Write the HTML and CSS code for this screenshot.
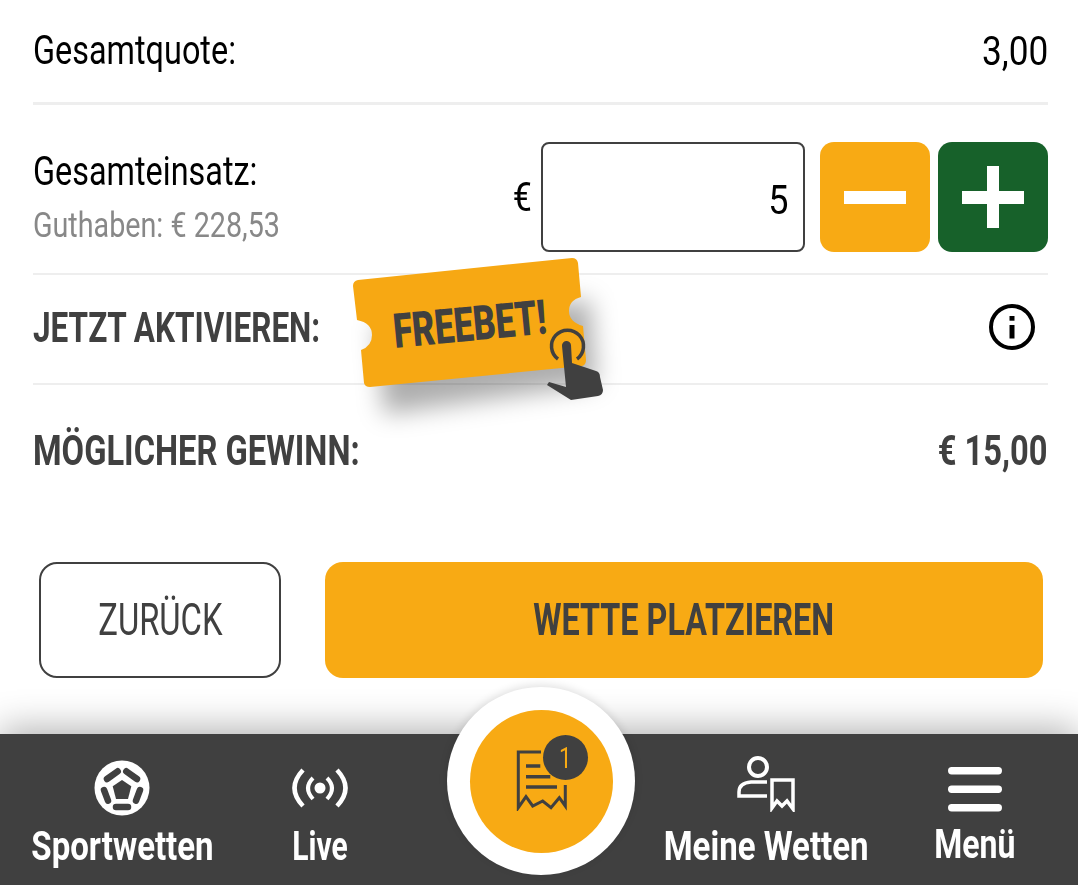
FILE: index.html
```html
<!DOCTYPE html>
<html lang="de">
<head>
    <meta charset="UTF-8">
    <meta name="viewport" content="width=device-width, initial-scale=1.0">
    <title>Wettschein</title>
    <link rel="stylesheet" href="styles.css">
</head>
<body>
<div class="page">
    <section class="slip">
        <div class="row row-total">
            <span class="label"><span class="squeeze">Gesamtquote:</span></span>
            <span class="value"><span class="squeeze to-right">3,00</span></span>
        </div>
        <div class="row row-stake">
            <div class="stake-text">
                <span class="label"><span class="squeeze">Gesamteinsatz:</span></span>
                <span class="balance"><span class="squeeze">Guthaben: € 228,53</span></span>
            </div>
            <div class="stake-controls">
                <span class="currency">€</span>
                <div class="stake-input"><span class="squeeze to-right">5</span></div>
                <button class="step step-minus"><span class="bar-h"></span></button>
                <button class="step step-plus"><span class="bar-h"></span><span class="bar-v"></span></button>
            </div>
        </div>
        <div class="row row-promo">
            <span class="heading"><span class="squeeze">JETZT AKTIVIEREN:</span></span>
            <svg class="info" viewBox="0 0 46 46" width="46" height="46">
                <circle cx="23" cy="23" r="21" fill="none" stroke="#000" stroke-width="4"/>
                <rect x="20.500" y="12" width="5" height="4.700" fill="#000"/>
                <rect x="20.500" y="21" width="5" height="13.500" fill="#000"/>
            </svg>
        </div>
        <div class="row row-win">
            <span class="heading win"><span class="squeeze">MÖGLICHER GEWINN:</span></span>
            <span class="heading win"><span class="squeeze to-right">€ 15,00</span></span>
        </div>
        <div class="actions">
            <button class="btn btn-back"><span class="squeeze to-center">ZURÜCK</span></button>
            <button class="btn btn-place"><span class="squeeze to-center">WETTE PLATZIEREN</span></button>
        </div>
    </section>

    <svg class="ticket" viewBox="0 0 280 170" width="280" height="170">
        <defs>
            <filter id="soft" x="-30%" y="-60%" width="160%" height="220%">
                <feGaussianBlur stdDeviation="12"/>
            </filter>
        </defs>
        <path d="M36 76L250 50L256 134L44 164Z" fill="rgba(0,0,0,.32)" filter="url(#soft)"/>
        <path d="M18 30L232 8Q237 8 238 13L241 47Q229 50 229 61Q229 72 243 76L246 110Q246 115 242 116L30 137Q25 137 24 133L21 100Q32 96 32 85Q32 73 17 70L13 36Q13 31 18 30Z" fill="#f7a813"/>
        <text class="ticket-text" transform="translate(55 98) rotate(-5.500) scale(.72 1)">FREEBET!</text>
        <path d="M218 109A16 16 0 1 1 237 109" fill="none" stroke="#404040" stroke-width="3.500"/>
        <path d="M222 96A4.500 4.500 0 0 1 231 95L232 113L256 121Q260 122 260 127L263 140Q263 145 258 146L231 150L207 135L209 132L226 137Z" fill="#404040"/>
    </svg>

    <nav class="tabbar">
        <a class="tab tab-sport">
            <svg viewBox="0 0 56 56" width="56" height="56">
                <circle cx="28" cy="28" r="27.500" fill="#fff"/>
                <path d="M28 20L37.300 26.300L34 39H22L18.700 26.300Z" fill="#404040"/>
                <path d="M13 19L23.700 11.300M43 19L32.300 11.300M10 30L14 40.700M46 30L42 40.700M22 47H34" fill="none" stroke="#404040" stroke-width="6.500" stroke-linecap="round"/>
            </svg>
            <span class="tab-label"><span class="squeeze to-center">Sportwetten</span></span>
        </a>
        <a class="tab tab-live">
            <svg viewBox="0 0 56 40" width="56" height="40">
                <circle cx="28" cy="20" r="5.500" fill="#fff"/>
                <path d="M21 10Q11 20 21 31M35 10Q45 20 35 31" fill="none" stroke="#fff" stroke-width="4"/>
                <path d="M11 2Q-6 20 11 38M45 2Q62 20 45 38" fill="none" stroke="#fff" stroke-width="4.500"/>
            </svg>
            <span class="tab-label"><span class="squeeze to-center">Live</span></span>
        </a>
        <div class="tab-gap"></div>
        <a class="tab tab-mine">
            <svg viewBox="0 0 58 56" width="58" height="56">
                <circle cx="21" cy="11" r="9" fill="none" stroke="#fff" stroke-width="4"/>
                <path d="M30 26H14Q2 27 2 36V40H30" fill="none" stroke="#fff" stroke-width="3.500"/>
                <path d="M35 24H56V53L50 45L45 50L40 45L35 52Z" fill="none" stroke="#fff" stroke-width="3.500"/>
            </svg>
            <span class="tab-label"><span class="squeeze to-center">Meine Wetten</span></span>
        </a>
        <a class="tab tab-menu">
            <svg viewBox="0 0 54 46" width="54" height="46">
                <rect x="0" y="0" width="54" height="7.500" rx="3.700" fill="#fff"/>
                <rect x="0" y="18.500" width="54" height="7.500" rx="3.700" fill="#fff"/>
                <rect x="0" y="37" width="54" height="7.500" rx="3.700" fill="#fff"/>
            </svg>
            <span class="tab-label"><span class="squeeze to-center">Menü</span></span>
        </a>
    </nav>

    <a class="slip-button">
        <span class="slip-disc">
            <svg viewBox="0 0 54 62" width="54" height="62">
                <path d="M26 3H3.300V58.700L11 47.700L17.700 57L27.700 52L36 58.700L44.300 48.700L50.300 57V36" fill="none" stroke="#404040" stroke-width="3"/>
                <path d="M11 17H25.300M11 27.700H35.300M11 38H42" fill="none" stroke="#404040" stroke-width="3.500"/>
            </svg>
            <span class="badge"><span class="squeeze to-center">1</span></span>
        </span>
    </a>
</div>
</body>
</html>
```

FILE: styles.css
```css
* {
    box-sizing: border-box;
}
body {
    margin: 0;
    font-family: 'Roboto', 'Liberation Sans', sans-serif;
    background-color: white;
    color: #000;
}
.page {
    position: relative;
    width: 1078px;
    height: 885px;
    overflow: hidden;
    display: flex;
    flex-direction: column;
}

/* no condensed font is installed, so the text gets narrowed */
.squeeze {
    display: inline-block;
    white-space: nowrap;
    transform: scaleX(.75);
    transform-origin: left center;
}
.squeeze.to-right {
    transform-origin: right center;
}
.squeeze.to-center {
    transform-origin: center center;
}

.slip {
    padding: 0 30px 0 33px;
}
.row {
    display: flex;
    justify-content: space-between;
    align-items: center;
}
.row-total {
    height: 105px;
    border-bottom: 3px solid #eeeeee;
}
.row-stake {
    height: 170px;
    border-bottom: 2px solid #eeeeee;
    padding-top: 16px;
}
.row-promo {
    height: 110px;
    border-bottom: 2px solid #eeeeee;
    padding: 0 13px 4px 0;
}
.row-win {
    height: 133px;
    padding-bottom: 4px;
}
.label {
    font-size: 40px;
    line-height: 46px;
}
.label .squeeze {
    transform: scaleX(.81);
}
.value {
    font-size: 40px;
}
.value .squeeze {
    transform: scaleX(.88);
}
.stake-text {
    display: flex;
    flex-direction: column;
    gap: 11px;
}
.balance {
    font-size: 35px;
    line-height: 40px;
    color: #888888;
}
.balance .squeeze {
    transform: scaleX(.82);
}
.heading {
    font-size: 42px;
    font-weight: 700;
    color: #404040;
}
.win {
    font-size: 43px;
}
.win .squeeze {
    transform: scaleX(.76);
}
.stake-controls {
    display: flex;
    align-items: center;
}
.currency {
    font-size: 40px;
    margin-right: 8px;
    transform: scaleX(.85);
}
.stake-input {
    width: 264px;
    height: 110px;
    border: 2px solid #404040;
    border-radius: 8px;
    font-size: 40px;
    text-align: right;
    line-height: 114px;
    padding-right: 15px;
    margin-right: 15px;
}
.stake-input .squeeze {
    transform: scaleX(.9);
}
.step {
    position: relative;
    width: 110px;
    height: 110px;
    border: none;
    border-radius: 14px;
    padding: 0;
    display: flex;
    align-items: center;
    justify-content: center;
}
.step-minus {
    background-color: #f8aa14;
    margin-right: 8px;
}
.step-plus {
    background-color: #17612a;
}
.bar-h {
    width: 62px;
    height: 13px;
    background-color: white;
}
.bar-v {
    position: absolute;
    left: 49px;
    top: 24px;
    width: 12px;
    height: 62px;
    background-color: white;
}
.actions {
    display: flex;
    justify-content: space-between;
    padding: 0 5px 0 6px;
    margin-top: 44px;
}
.btn {
    height: 116px;
    border-radius: 18px;
    color: #404040;
    font-family: inherit;
    font-size: 44px;
}
.btn-back {
    width: 242px;
    background-color: white;
    border: 2px solid #404040;
}
.btn-back .squeeze {
    transform: scaleX(.745);
}
.btn-place {
    width: 718px;
    background-color: #f8aa14;
    border: none;
    font-weight: 700;
}
.btn-place .squeeze {
    transform: scaleX(.735);
}

.ticket {
    position: absolute;
    left: 340px;
    top: 250px;
    overflow: visible;
}
.ticket-text {
    font-size: 48px;
    font-weight: 900;
    fill: #404040;
}

.tabbar {
    margin-top: auto;
    height: 151px;
    flex: none;
    display: flex;
    background-color: #404040;
    box-shadow: 0 -6px 34px rgba(0, 0, 0, .3);
}
.tab {
    flex: none;
    display: flex;
    flex-direction: column;
    align-items: center;
    color: white;
}
.tab-sport {
    width: 244px;
    padding-top: 26px;
}
.tab-live {
    width: 152px;
    padding-top: 34px;
}
.tab-gap {
    flex: none;
    width: 290px;
}
.tab-mine {
    width: 160px;
    padding-top: 22px;
}
.tab-menu {
    width: 258px;
    padding-top: 33px;
}
.tab-label {
    font-size: 40px;
    font-weight: 700;
    line-height: 46px;
    margin-top: 8px;
}
.tab-label .squeeze {
    transform: scaleX(.825);
}
.tab-live .squeeze {
    transform: scaleX(.75);
}
.tab-menu .squeeze {
    transform: scaleX(.8);
}
.tab-live .tab-label {
    margin-top: 16px;
}
.tab-mine .tab-label {
    margin-top: 12px;
}
.tab-menu .tab-label {
    margin-top: 9px;
}

.slip-button {
    position: absolute;
    left: 447px;
    top: 687px;
    width: 188px;
    height: 188px;
    border-radius: 50%;
    background-color: white;
    display: flex;
    align-items: center;
    justify-content: center;
    box-shadow: 0 -2px 8px rgba(0, 0, 0, .12);
}
.slip-disc {
    position: relative;
    width: 143px;
    height: 143px;
    border-radius: 50%;
    background-color: #f8aa14;
    display: block;
}
.slip-disc svg {
    position: absolute;
    left: 45px;
    top: 39px;
}
.badge {
    position: absolute;
    left: 73px;
    top: 25px;
    width: 45px;
    height: 45px;
    border-radius: 50%;
    background-color: #404040;
    color: #f8aa14;
    font-size: 30px;
    line-height: 45px;
    text-align: center;
}
```
